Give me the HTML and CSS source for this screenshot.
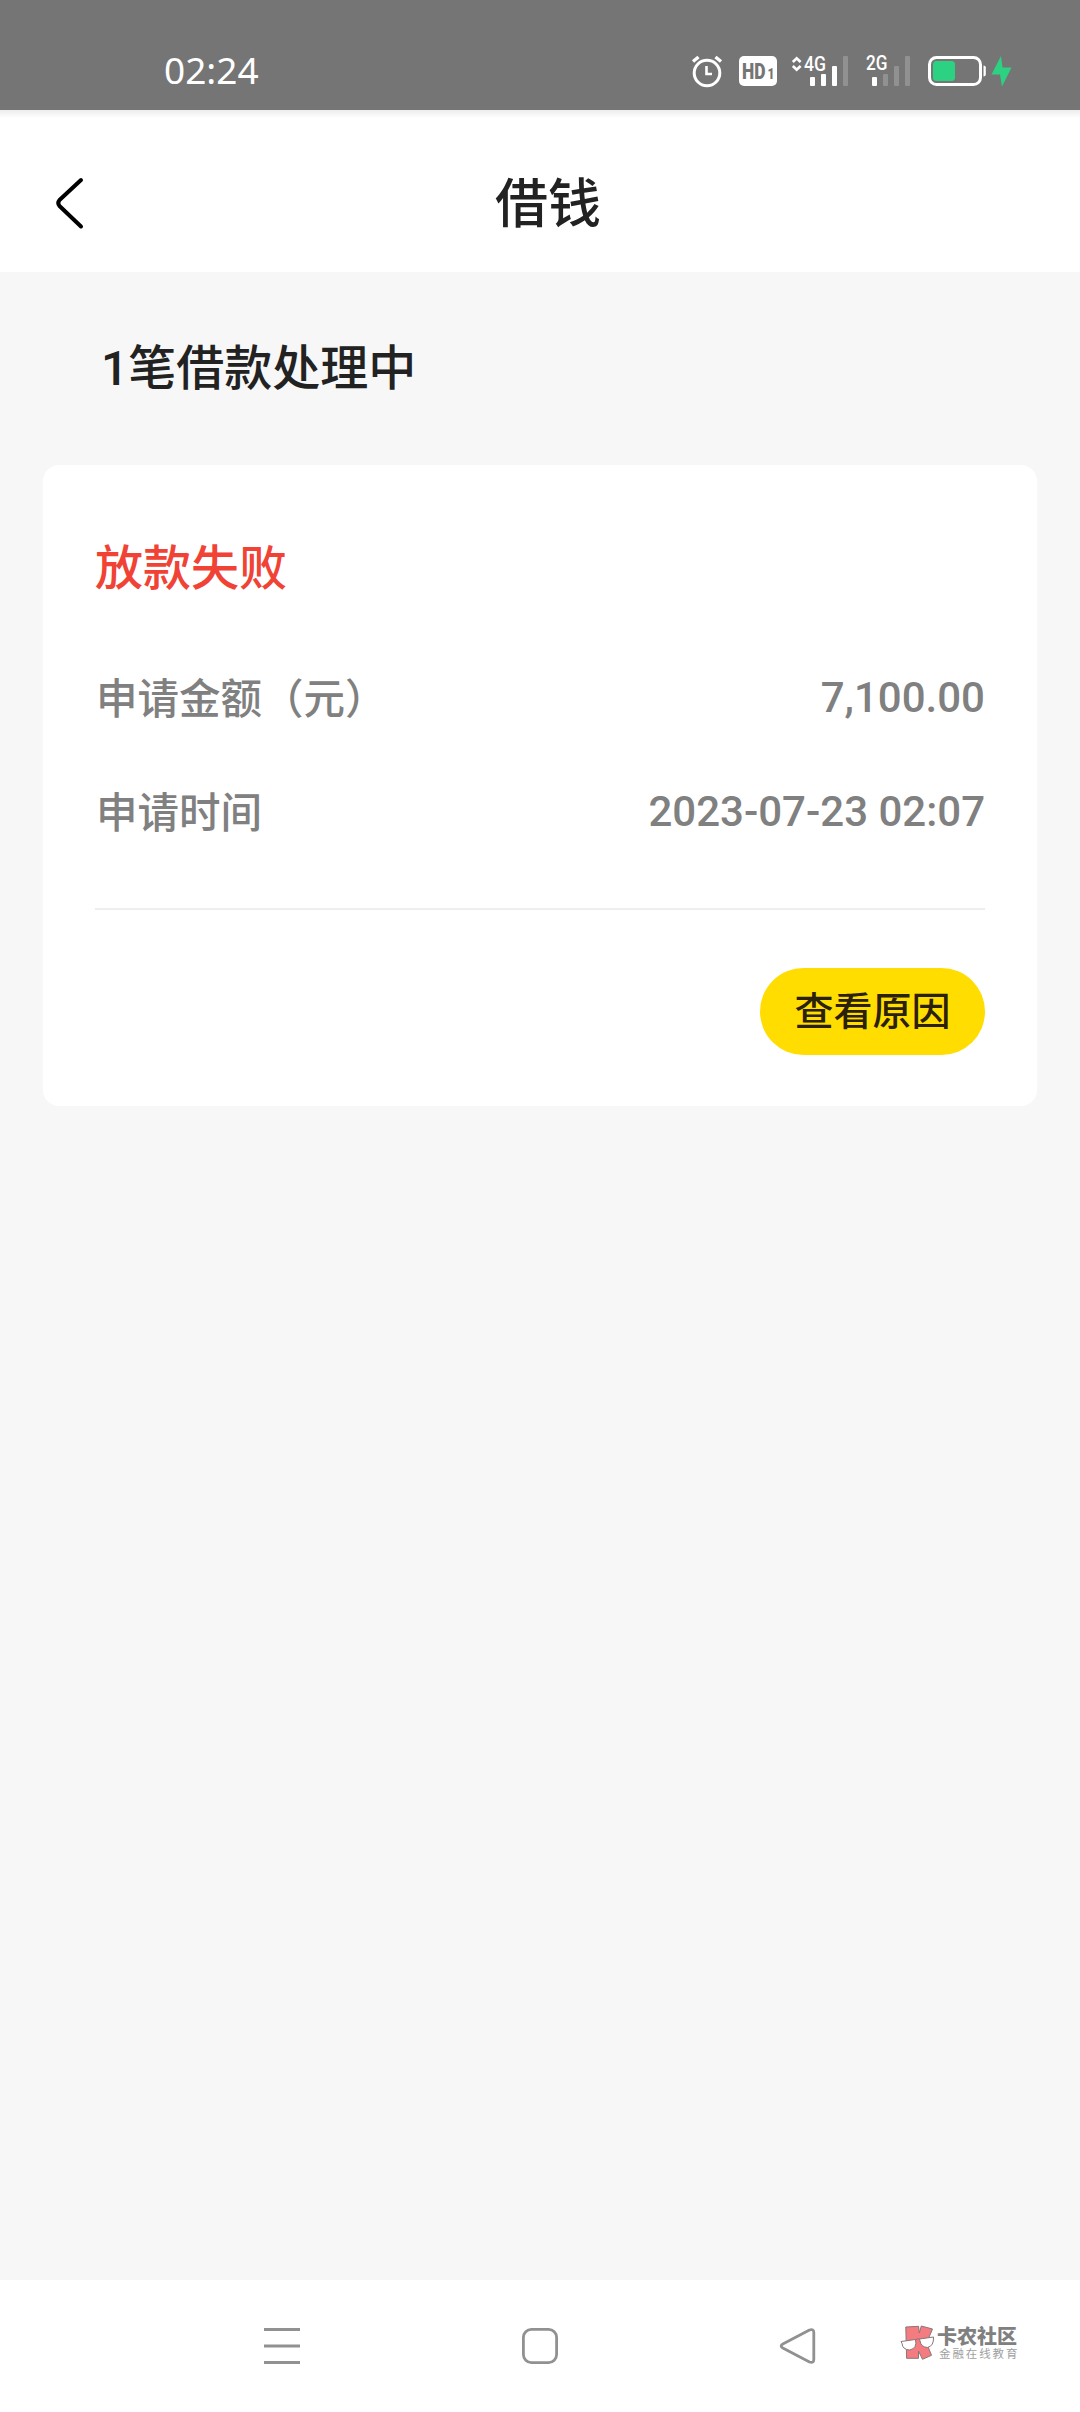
FILE: index.html
```html
<!DOCTYPE html>
<html lang="zh-CN">
<head>
<meta charset="utf-8">
<title>借钱</title>
<link rel="stylesheet" href="styles.css">
</head>
<body>
<div class="screen">
  <div class="status">
    <span class="clock">02:24</span>
    <div class="status-icons">
      <svg class="alarm" width="32" height="40" viewBox="691 50 32 40" fill="none" stroke="#fff" stroke-width="3">
        <circle cx="707" cy="73" r="12.8"/>
        <path d="M706.5 66V74H712" stroke-width="2.6"/>
        <path d="M693 61.5L698.5 57M721 61.5L715.5 57" stroke-width="3.4"/>
      </svg>
      <svg class="hd" width="38" height="40" viewBox="739 50 38 40">
        <rect x="739" y="56" width="38" height="30" rx="5" fill="#fff"/>
        <text x="742" y="78.7" font-size="22" font-weight="900" textLength="23.5" lengthAdjust="spacingAndGlyphs">HD</text>
        <text x="767.6" y="78.7" font-size="14" font-weight="900" textLength="7" lengthAdjust="spacingAndGlyphs">1</text>
      </svg>
      <svg class="signal" width="57" height="40" viewBox="791 50 57 40" fill="#fff">
        <path d="M792.8 62L796.7 58.2L800.6 62M792.8 66L796.7 69.8L800.6 66" fill="none" stroke="#fff" stroke-width="2.6"/>
        <text x="804" y="70.5" font-size="19.5" font-weight="500" textLength="22" lengthAdjust="spacingAndGlyphs">4G</text>
        <rect x="810" y="77" width="5" height="9" rx="1"/>
        <rect x="821" y="74" width="5" height="12" rx="1"/>
        <rect x="832" y="66" width="5" height="20" rx="1"/>
        <rect x="843" y="56" width="5" height="30" rx="1" fill="#919191"/>
      </svg>
      <svg class="signal" width="46" height="40" viewBox="865 50 46 40" fill="#fff">
        <text x="866" y="70.2" font-size="19.5" font-weight="500" textLength="21.5" lengthAdjust="spacingAndGlyphs">2G</text>
        <rect x="872" y="77" width="5" height="9" rx="1"/>
        <rect x="883" y="74" width="5" height="12" rx="1" fill="#919191"/>
        <rect x="894" y="66" width="5" height="20" rx="1" fill="#919191"/>
        <rect x="905" y="56" width="5" height="30" rx="1" fill="#919191"/>
      </svg>
      <svg class="battery" width="84" height="40" viewBox="928 50 84 40">
        <rect x="929.5" y="57.5" width="51" height="27" rx="7" fill="none" stroke="#fff" stroke-width="3"/>
        <rect x="933" y="61" width="22" height="20" rx="3.5" fill="#2dd182"/>
        <path d="M983.5 65.5q2.3 0 2.3 2v7q0 2-2.3 2z" fill="#fff"/>
        <path d="M1001 56L991.5 74.5H1000L1002 86.5L1011.5 67.5H1002.5Z" fill="#2dd182"/>
      </svg>
    </div>
  </div>
  <header class="topbar">
    <svg class="back" width="32" height="56" viewBox="54 174 32 56" fill="none" stroke="#000" stroke-width="4" stroke-linecap="round" stroke-linejoin="round">
      <path d="M81 180L59.5 200Q57 203 59.5 206L81 226.5"/>
    </svg>
    <h1 class="title">借钱</h1>
  </header>
  <main class="content">
    <h2 class="summary">1笔借款处理中</h2>
    <section class="card">
      <h3 class="state">放款失败</h3>
      <div class="row"><span class="label">申请金额（元）</span><span class="value">7,100.00</span></div>
      <div class="row"><span class="label">申请时间</span><span class="value">2023-07-23 02:07</span></div>
      <div class="actions"><button class="reason">查看原因</button></div>
    </section>
  </main>
  <nav class="nav">
    <svg class="nav-icon" width="40" height="40" viewBox="0 0 40 40" stroke="#919191" stroke-width="3">
      <path d="M2 3.5H38M2 20H38M2 36.5H38"/>
    </svg>
    <svg class="nav-icon" width="40" height="40" viewBox="0 0 40 40" fill="none" stroke="#919191" stroke-width="2.8">
      <rect x="3.4" y="3.4" width="33.2" height="33.2" rx="8"/>
    </svg>
    <svg class="nav-icon" width="40" height="40" viewBox="0 0 40 40" fill="none" stroke="#919191" stroke-width="2.8" stroke-linejoin="round">
      <path d="M4.8 18L31.5 4Q35.8 2.5 35.8 6.5V33.5Q35.8 37.5 31.5 36L4.8 22Q1.5 20 4.8 18Z"/>
    </svg>
    <div class="brand">
      <svg width="35" height="37" viewBox="900 2324 35 37" stroke="#8a7577" stroke-width="1">
        <path d="M905.8 2327L918.6 2326.3L919.3 2333L921.3 2326L932.5 2329L926.5 2343L931.5 2355.3L922.5 2359.3L918.5 2351V2358.3H906.6Z" fill="#f47b80"/>
        <path d="M901 2341.5L915.5 2339.5Q917.5 2348.5 909.5 2350Q902.5 2349.5 902 2343.5ZM919.5 2339L933.5 2337Q934 2346 927.5 2347.5Q921 2347 920 2341Z" fill="#fff"/>
        <path d="M915.5 2340Q917.5 2338 919.5 2339" fill="none"/>
      </svg>
      <div class="brand-text"><strong>卡农社区</strong><small>金融在线教育</small></div>
    </div>
  </nav>
</div>
</body>
</html>
```
FILE: styles.css
```css
* { box-sizing: border-box; }

body {
  margin: 0;
  font-family: Roboto, "Noto Sans CJK SC", sans-serif;
  background: #f7f7f7;
}

h1, h2, h3 { margin: 0; font-weight: 500; }

svg { display: block; flex: none; }

.screen {
  display: flex;
  flex-direction: column;
  width: 1080px;
  height: 2412px;
}

.status {
  display: flex;
  flex: none;
  align-items: flex-start;
  justify-content: space-between;
  height: 110px;
  padding: 50px 68px 0 164px;
  background: #757575;
  color: #fff;
}

.clock {
  font: 400 37px/40px "Noto Sans", sans-serif;
}

.status-icons { display: flex; }
.hd { margin-left: 16px; fill: #757575; }
.signal { margin-left: 14px; }
.signal + .signal { margin-left: 17px; }
.battery { margin-left: 17px; }

.topbar {
  display: grid;
  flex: none;
  grid-template-columns: 32px 1fr 32px;
  align-items: center;
  height: 162px;
  padding: 22px 38px 0 54px;
  background: linear-gradient(#ececec, #fff 8px);
}

.title {
  padding-top: 6px;
  font-size: 53px;
  line-height: 60px;
  text-align: center;
  color: #222;
}

.content { flex: 1; padding: 0 43px; }

.summary {
  padding: 67px 0 0 58px;
  height: 193px;
  font-size: 48px;
  line-height: 60px;
  color: #222;
}

.card {
  height: 641px;
  padding: 74px 52px 0;
  border-radius: 16px;
  background: #fff;
}

.state {
  margin-bottom: 69px;
  font-size: 48px;
  line-height: 60px;
  color: #f04336;
}

.row {
  display: flex;
  justify-content: space-between;
  height: 114px;
  font-size: 42px;
  font-weight: 500;
  line-height: 60px;
  color: #808080;
}

.label {
  padding: 2px 0 0 1px;
  font-size: 41.5px;
}

.actions {
  display: flex;
  justify-content: flex-end;
  margin-top: 12px;
  padding-top: 58px;
  border-top: 2px solid #eee;
}

.reason {
  width: 225px;
  height: 87px;
  padding: 0 0 7px;
  border: 0;
  border-radius: 44px;
  background: #fd0;
  font: 500 39px/60px "Noto Sans CJK SC", sans-serif;
  color: #2b2008;
}

.nav {
  display: flex;
  flex: none;
  height: 132px;
  padding: 46px 62px 0 262px;
  background: #fff;
}

.nav-icon + .nav-icon { margin-left: 218px; }

.brand {
  display: flex;
  gap: 2px;
  margin: -2px 0 0 82px;
  color: #808080;
}

.brand-text {
  display: flex;
  flex-direction: column;
  padding-top: 3px;
  white-space: nowrap;
}

.brand strong { font-size: 20px; line-height: 20px; font-weight: 900; }
.brand small { padding-left: 2px; font-size: 11.5px; line-height: 14px; letter-spacing: 1.9px; color: #a0a0a0; }
```
